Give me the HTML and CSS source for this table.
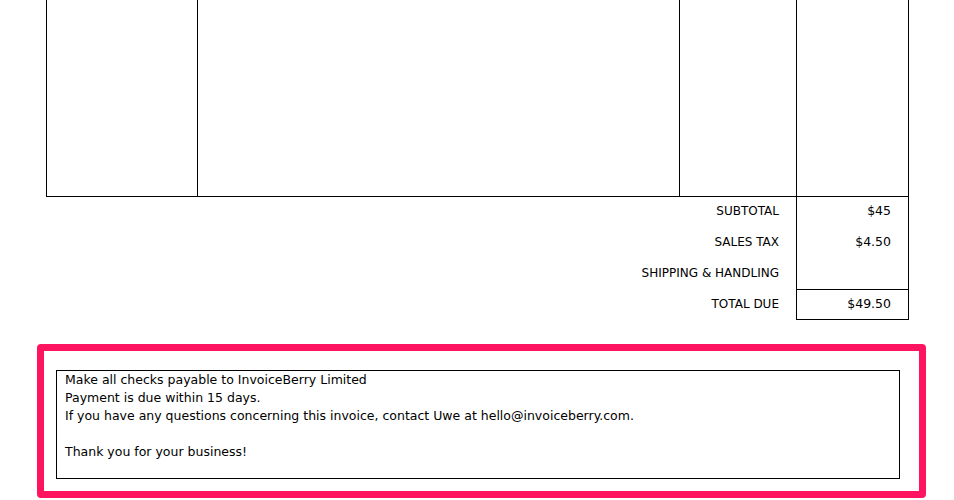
FILE: index.html
```html
<!DOCTYPE html>
<html>
<head>
<meta charset="utf-8">
<link rel="stylesheet" href="styles.css">
</head>
<body>
<div class="page">
  <table class="invoice">
    <colgroup>
      <col class="c1"><col class="c2"><col class="c3"><col class="c4">
    </colgroup>
    <tr class="items">
      <td class="cell"></td>
      <td class="cell"></td>
      <td class="cell"></td>
      <td class="cell"></td>
    </tr>
    <tr class="sum first">
      <td colspan="3" class="label">SUBTOTAL</td>
      <td class="val">$45</td>
    </tr>
    <tr class="sum">
      <td colspan="3" class="label">SALES TAX</td>
      <td class="val">$4.50</td>
    </tr>
    <tr class="sum">
      <td colspan="3" class="label">SHIPPING &amp; HANDLING</td>
      <td class="val"></td>
    </tr>
    <tr class="sum total">
      <td colspan="3" class="label">TOTAL DUE</td>
      <td class="val">$49.50</td>
    </tr>
  </table>

  <div class="highlight">
    <div class="notes">
      <p>Make all checks payable to InvoiceBerry Limited</p>
      <p>Payment is due within 15 days.</p>
      <p>If you have any questions concerning this invoice, contact Uwe at hello@invoiceberry.com.</p>
      <p>&nbsp;</p>
      <p>Thank you for your business!</p>
    </div>
  </div>
</div>
</body>
</html>
```
FILE: styles.css
```css
html, body {
  margin: 0;
  padding: 0;
  background: #fff;
}
body {
  font-family: "DejaVu Sans", Verdana, sans-serif;
  font-size: 12px;
  color: #000;
  overflow: hidden;
}
.page {
  width: 954px;
  height: 500px;
}
.invoice {
  margin-left: 46px;
  border-collapse: collapse;
  table-layout: fixed;
  width: 862px;
}
.c1 { width: 151px; }
.c2 { width: 482px; }
.c3 { width: 117px; }
.c4 { width: 112px; }
.items .cell {
  height: 196px;
  padding: 0;
  border-left: 1px solid #000;
  border-right: 1px solid #000;
  border-bottom: 1px solid #000;
}
.sum td {
  height: 31px;
  box-sizing: border-box;
  padding: 0 17px 2px 0;
  text-align: right;
  vertical-align: middle;
  line-height: 14px;
}
.sum .label,
.sum .val {
  border-right: 1px solid #000;
}
.sum .val {
  font-size: 12.5px;
}
.sum.total td {
  height: 30px;
  padding-bottom: 2px;
}
.sum.total .val {
  border-top: 1px solid #000;
  border-bottom: 1px solid #000;
}
.highlight {
  margin: 24px 28px 0 37px;
  height: 154px;
  border: 7px solid #ff1460;
  border-radius: 4px;
  padding: 19px 19px 0 12px;
  box-sizing: border-box;
}
.notes {
  border: 1px solid #000;
  height: 109px;
  padding: 0 8px 0 8px;
  box-sizing: border-box;
  font-size: 12.5px;
}
.notes p {
  margin: 0;
  line-height: 18px;
}
```
